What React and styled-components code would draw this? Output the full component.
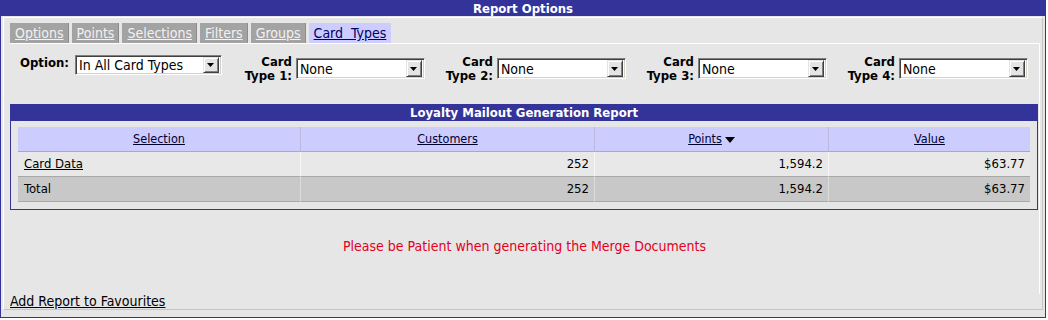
import React from "react";
import styled, { createGlobalStyle } from "styled-components";

const Global = createGlobalStyle`
  html, body { margin: 0; padding: 0; background: #ffffff; }
  body { font-family: "DejaVu Sans Condensed", "DejaVu Sans", sans-serif; }
`;

const Frame = styled.div`
  box-sizing: border-box;
  width: 1046px;
  height: 318px;
  border: 1px solid #333399;
  background: #e6e6e6;
  display: flex;
  flex-direction: column;
`;

const Header = styled.div`
  height: 15px;
  background: #333399;
  color: #ffffff;
  font-weight: bold;
  font-size: 13px;
  line-height: 15px;
  text-align: center;
`;

const Inner = styled.div`
  flex: 1;
  margin: 1px 2px 7px 2px;
  border: 1px solid;
  border-color: #ffffff #c4c4c4 #c4c4c4 #ffffff;
  display: flex;
  flex-direction: column;
  padding: 5px 2px 0 6px;
`;

const Tabs = styled.div`
  display: flex;
  height: 20px;
`;

const Tab = styled.a`
  display: block;
  height: 20px;
  line-height: 20px;
  padding: 0 4px 0 5px;
  margin-right: 3px;
  font-size: 14px;
  text-decoration: underline;
  background: ${(p) => (p.$active ? "#ccccff" : "#a3a3a3")};
  color: ${(p) => (p.$active ? "#000066" : "#f2f2f2")};
  border-right: 1px solid ${(p) => (p.$active ? "#ccccff" : "#8c8c8c")};
  white-space: pre;
`;

const TabPanel = styled.div`
  flex: 1;
  border-top: 1px solid #ffffff;
  border-right: 1px solid #ffffff;
  padding-top: 11px;
  display: flex;
  flex-direction: column;
`;

const FormRow = styled.div`
  display: flex;
  align-items: flex-start;
  padding-left: 10px;
  height: 28px;
`;

const OptionGroup = styled.div`
  display: flex;
  align-items: flex-start;
  gap: 6px;
  margin-right: 18px;
`;

const CardGroup = styled.div`
  display: flex;
  align-items: flex-start;
  gap: 4px;
  margin-right: 16px;
`;

const Label = styled.div`
  font-weight: bold;
  font-size: 13px;
  line-height: ${(p) => (p.$two ? "14px" : "16px")};
  text-align: right;
  width: ${(p) => (p.$w ? `${p.$w}px` : "auto")};
  color: #000000;
`;

const SelectBox = styled.div`
  box-sizing: border-box;
  width: ${(p) => p.$w}px;
  height: ${(p) => p.$h}px;
  margin-top: ${(p) => p.$top || 0}px;
  background: #ffffff;
  border: 1px solid;
  border-color: #808080 #ffffff #ffffff #808080;
  box-shadow: inset 1px 1px 0 #404040, inset -1px -1px 0 #d4d0c8;
  display: flex;
  align-items: center;
  justify-content: space-between;
  padding: 0 2px 0 3px;
  font-size: 14px;
  color: #000000;
`;

const DropBtn = styled.span`
  box-sizing: border-box;
  width: 16px;
  height: ${(p) => p.$h}px;
  background: #e4e4e4;
  border: 1px solid;
  border-color: #e4e4e4 #404040 #404040 #e4e4e4;
  box-shadow: inset 1px 1px 0 #ffffff, inset -1px -1px 0 #808080;
  display: flex;
  align-items: center;
  justify-content: center;
`;

const ReportBox = styled.div`
  box-sizing: border-box;
  width: 1028px;
  margin-top: 21px;
  border: 1px solid #333399;
`;

const ReportTitle = styled.div`
  height: 16px;
  background: #333399;
  color: #ffffff;
  font-weight: bold;
  font-size: 13px;
  line-height: 16px;
  text-align: center;
`;

const TableWrap = styled.div`
  padding: 6px 7px 7px 7px;
`;

const Table = styled.div`
  display: grid;
  grid-template-columns: 282px 294px 234px 1fr;
  font-size: 13px;
`;

const HeadCell = styled.div`
  height: 24px;
  line-height: 24px;
  background: #ccccff;
  border-bottom: 1px solid #a9a9c0;
  border-left: ${(p) => (p.$first ? "none" : "1px solid #b9b9dc")};
  text-align: center;
  font-size: 12.5px;
  color: #000033;
  a {
    color: #000033;
    text-decoration: underline;
  }
`;

const Cell = styled.div`
  height: 24px;
  line-height: 24px;
  background: ${(p) => (p.$total ? "#c8c8c8" : "#e8e8e8")};
  border-bottom: 1px solid #a8a8a8;
  border-left: ${(p) => (p.$first ? "none" : `1px solid ${p.$total ? "#dcdcdc" : "#f6f6f6"}`)};
  text-align: ${(p) => (p.$right ? "right" : "left")};
  padding: 0 5px 0 6px;
  color: #000000;
  a {
    color: #000000;
    text-decoration: underline;
  }
`;

const Message = styled.div`
  margin-top: 28px;
  text-align: center;
  color: #e3001b;
  font-size: 14px;
  line-height: 16px;
`;

const FavLink = styled.a`
  display: block;
  font-size: 14px;
  line-height: 15px;
  height: 15px;
  color: #000000;
  text-decoration: underline;
`;

const Arrow = () => (
  <svg width="7" height="4" viewBox="0 0 7 4">
    <polygon points="0,0 7,0 3.5,4" fill="#000" />
  </svg>
);

const SortArrow = () => (
  <svg width="10" height="6" viewBox="0 0 10 6" style={{ marginLeft: 3, verticalAlign: "middle" }}>
    <polygon points="0,0 10,0 5,6" fill="#000" />
  </svg>
);

const Select = ({ w, h, top, value }) => (
  <SelectBox $w={w} $h={h} $top={top}>
    <span>{value}</span>
    <DropBtn $h={h - 4}>
      <Arrow />
    </DropBtn>
  </SelectBox>
);

const tabs = ["Options", "Points", "Selections", "Filters", "Groups", "Card  Types"];

export default function App() {
  return (
    <>
      <Global />
      <Frame>
        <Header>Report Options</Header>
        <Inner>
          <Tabs>
            {tabs.map((t, i) => (
              <Tab key={t} $active={i === tabs.length - 1}>
                {t}
              </Tab>
            ))}
          </Tabs>
          <TabPanel>
            <FormRow>
              <OptionGroup>
                <Label>Option:</Label>
                <Select w={147} h={20} value="In All Card Types" />
              </OptionGroup>
              {[1, 2, 3, 4].map((n) => (
                <CardGroup key={n}>
                  <Label $two $w={52}>
                    Card
                    <br />
                    Type {n}:
                  </Label>
                  <Select w={129} h={21} top={3} value="None" />
                </CardGroup>
              ))}
            </FormRow>
            <ReportBox>
              <ReportTitle>Loyalty Mailout Generation Report</ReportTitle>
              <TableWrap>
                <Table>
                  <HeadCell $first>
                    <a>Selection</a>
                  </HeadCell>
                  <HeadCell>
                    <a>Customers</a>
                  </HeadCell>
                  <HeadCell>
                    <a>Points</a>
                    <SortArrow />
                  </HeadCell>
                  <HeadCell>
                    <a>Value</a>
                  </HeadCell>

                  <Cell $first>
                    <a>Card Data</a>
                  </Cell>
                  <Cell $right>252</Cell>
                  <Cell $right>1,594.2</Cell>
                  <Cell $right>$63.77</Cell>

                  <Cell $first $total>Total</Cell>
                  <Cell $right $total>252</Cell>
                  <Cell $right $total>1,594.2</Cell>
                  <Cell $right $total>$63.77</Cell>
                </Table>
              </TableWrap>
            </ReportBox>
            <Message>Please be Patient when generating the Merge Documents</Message>
          </TabPanel>
          <FavLink>Add Report to Favourites</FavLink>
        </Inner>
      </Frame>
    </>
  );
}
